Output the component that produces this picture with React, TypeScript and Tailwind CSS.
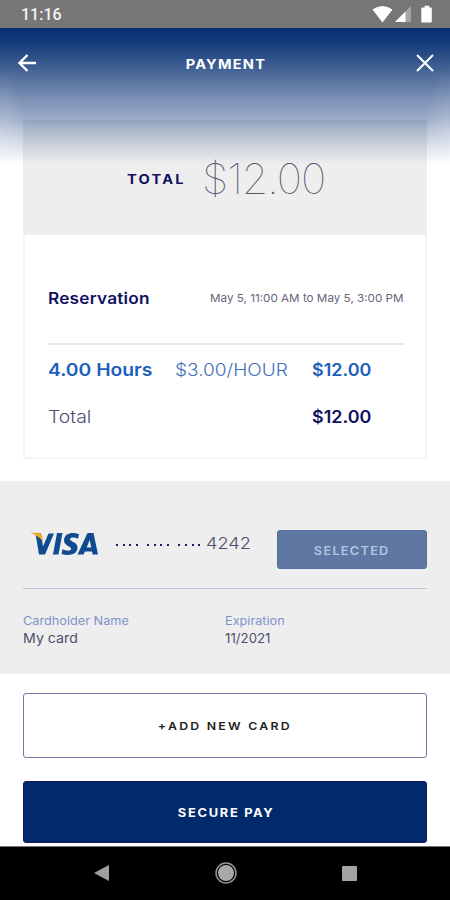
import React from "react";

function StatusBar() {
  return (
    <div className="flex h-7 items-center justify-between bg-[#767676] pl-[21px] pr-[18px]">
      <span className="relative top-[1px] origin-left scale-x-[0.97] font-['Roboto',sans-serif] text-[16.5px] font-medium leading-none text-[#f4f4f4]">11:16</span>
      <svg width="60" height="18" viewBox="0 0 60 18" fill="#fff">
        <path d="M0.5 4.6Q10.500-2.600 20.500 4.600L10.500 17.500Z" />
        <path d="M39 1V17H23Z" fill="#a6a6a6" />
        <path d="M33.500 6.500V17H23Z" />
        <path d="M50.500 2.500h2.200V.8h4.500v1.700h1.800q.8 0 .8.800v13.400q0 .8-.8.800h-8.900q-.8 0-.8-.8V3.300q0-.8 1.200-.8Z" />
      </svg>
    </div>
  );
}

function Header() {
  return (
    <header className="absolute inset-x-0 top-7 h-[136px] bg-[radial-gradient(ellipse_26px_70px_at_0%_80%,rgba(255,255,255,0.2),rgba(255,255,255,0)),radial-gradient(ellipse_26px_70px_at_100%_80%,rgba(255,255,255,0.2),rgba(255,255,255,0)),linear-gradient(to_bottom,rgba(4,45,113,1)_0%,rgba(4,45,113,0.92)_12%,rgba(4,45,113,0.72)_33%,rgba(4,45,113,0.53)_52%,rgba(4,45,113,0.38)_68%,rgba(4,45,113,0.2)_82%,rgba(4,45,113,0)_100%)]">
      <div className="flex h-[70px] items-center justify-between pl-[18px] pr-4">
        <svg width="19" height="18" viewBox="0 0 19 18" fill="none" stroke="#fff" strokeWidth="2.300">
          <path d="M18 9H2M9.500 1L1.500 9l8 8" />
        </svg>
        <h1 className="relative left-[-0.5px] top-[1px] scale-x-[1.12] text-[13px] font-bold leading-none tracking-[1.1px] text-white">PAYMENT</h1>
        <svg width="18" height="18" viewBox="0 0 18 18" fill="none" stroke="#fff" strokeWidth="2">
          <path d="M1 1l16 16M17 1L1 17" />
        </svg>
      </div>
    </header>
  );
}

function Summary() {
  return (
    <section className="mx-[23px] mt-[92px] h-[339px] border-2 border-[#f5f5f6] text-[#4c4c78]">
      <div className="-mx-[2px] -mt-[2px] flex h-[115px] items-center bg-[#eeeeee] pl-[104px] pt-[2px]">
        <div className="w-[75px] pb-[2px]">
          <span className="inline-block origin-left scale-x-[1.12] text-[13px] font-bold leading-none tracking-[2px] text-[#110f60]">TOTAL</span>
        </div>
        <span className="relative top-[1px] origin-left scale-x-[1.03] text-[41.500px] font-thin leading-none tracking-[-1px] text-[#55556f] opacity-[0.99]">$12.00</span>
      </div>
      <div className="pl-[23px] pr-[21px]">
        <div className="flex h-[110px] items-center justify-between border-b-2 border-[#e9eaf0] pt-[19px]">
          <span className="origin-left scale-x-[1.11] text-[15.500px] font-semibold leading-none tracking-[0.2px] text-[#110f60]">Reservation</span>
          <span className="origin-right scale-x-[1.06] whitespace-nowrap text-[11px] leading-none text-[#65657c]">May 5, 11:00 AM to May 5, 3:00 PM</span>
        </div>
        <div className="grid h-[48px] grid-cols-[127px_137px_1fr] items-center pt-[2px] text-[17px] leading-none text-[#1c5fba]">
          <span className="origin-left scale-x-[1.135] justify-self-start font-semibold">4.00 Hours</span>
          <span className="origin-left scale-x-[1.12] justify-self-start font-light text-[#3f6fbb]">$3.00/HOUR</span>
          <span className="origin-left scale-x-[1.055] justify-self-start font-semibold">$12.00</span>
        </div>
        <div className="grid h-[48px] grid-cols-[264px_1fr] items-center pt-px text-[17px] leading-none">
          <span className="origin-left scale-x-[1.14] justify-self-start font-light">Total</span>
          <span className="origin-left scale-x-[1.055] justify-self-start font-semibold text-[#110f60]">$12.00</span>
        </div>
      </div>
    </section>
  );
}

function VisaLogo() {
  return (
    <svg width="68" height="24" viewBox="0 0 68 24">
      <g fill="#104a90">
        <path d="M5.500 1.500h5.500l2 13 5.500-13h5.500L15 22.500H9Z" />
        <path d="M27 1h5.500l-4 21.500H23Z" />
        <path d="M49 2.200l-1 4.500c-3.500-1.600-8-1.500-8 .6 0 2.400 7.500 2.600 7.500 8.200 0 7.700-9.200 8.500-16 6.500l1-4.800c4 2 8.700 2 8.700-.5 0-2.700-7.200-2.800-7.200-8.300C34 1.500 42.500-.5 49 2.200Z" />
        <path fillRule="evenodd" d="M57.500 1h6L68 22.500h-5.300l-.7-3h-7L53.500 22.500h-6ZM59.700 8l-3 7.500h4.600Z" />
      </g>
      <path d="M0 .8h8.500q3 0 3.500 3l1 6Q9 4 0 .8Z" fill="#f3a531" />
    </svg>
  );
}

function CardDots() {
  return (
    <div className="flex gap-[9px]">
      {[0, 1, 2].map((group) => (
        <div key={group} className="flex gap-[4.700px]">
          {[0, 1, 2, 3].map((dot) => (
            <i key={dot} className="size-[2px] bg-[#1d1b62]" />
          ))}
        </div>
      ))}
    </div>
  );
}

function PaymentCard() {
  return (
    <section className="mt-[22px] h-[193px] bg-[#eeeeee] px-[23px] text-[#50506c]">
      <div className="flex h-[108px] border-b border-[#bdc6df] pt-[49px]">
        <div className="flex h-[27px] w-[75px] shrink-0 items-center pl-[7px]"><VisaLogo /></div>
        <div className="flex h-[30px] w-[108px] shrink-0 items-center pl-[18px]"><CardDots /></div>
        <div className="w-[71px] shrink-0 pt-[5px]">
          <span className="block w-max origin-left scale-x-[1.1] text-[16.500px] font-light leading-none">4242</span>
        </div>
        <button className="h-[39px] w-[150px] shrink-0 rounded-[3px] border border-[#5270a5] bg-[#5f78a3] pb-[2px] text-[#b5c5e1]">
          <span className="inline-block scale-x-[1.06] text-[12px] font-semibold leading-none tracking-[1.2px]">SELECTED</span>
        </button>
      </div>
      <div className="grid grid-cols-2 pt-[26px]">
        <div>
          <p className="w-max origin-left scale-x-[1.13] text-[11.250px] leading-[13px] text-[#7d94ca]">Cardholder Name</p>
          <p className="mt-[2px] w-max origin-left scale-x-[1.07] text-[13.250px] leading-[17px]">My card</p>
        </div>
        <div>
          <p className="w-max origin-left scale-x-[1.13] text-[11.250px] leading-[13px] text-[#7d94ca]">Expiration</p>
          <p className="mt-[2px] w-max origin-left text-[13.250px] leading-[17px]">11/2021</p>
        </div>
      </div>
    </section>
  );
}

function NavigationBar() {
  return (
    <nav className="mt-[3px] flex h-[55px] items-center justify-between border-t border-[#777] bg-black pb-[2px] pl-[94px] pr-[93px]">
      <svg width="15" height="16" viewBox="0 0 15 16" fill="#a0a0a0"><path d="M15 0v16L0 8Z" /></svg>
      <svg width="22" height="22" viewBox="0 0 22 22" fill="none">
        <circle cx="11" cy="11" r="10" stroke="#959595" strokeWidth="1.500" />
        <circle cx="11" cy="11" r="8" fill="#a8a8a8" />
      </svg>
      <i className="size-[15px] rounded-[1px] bg-[#a3a3a3]" />
    </nav>
  );
}

export default function App() {
  return (
    <main className="relative h-[900px] w-[450px] overflow-hidden bg-white font-['Inter',sans-serif]">
      <StatusBar />
      <Summary />
      <Header />
      <PaymentCard />
      <div className="mx-[23px] mt-[19px] flex flex-col gap-[23px]">
        <button className="h-[65px] rounded-[3px] border border-[#7774a2] pb-[3px] text-[#222]">
          <span className="inline-block scale-x-[1.12] text-[11px] font-semibold leading-none tracking-[2px]">+ADD NEW CARD</span>
        </button>
        <button className="h-[62px] rounded-[3px] border border-[#17175f] bg-[#002a6c] pb-[3px] text-white">
          <span className="relative left-[1px] inline-block scale-x-[1.12] text-[11.500px] font-bold leading-none tracking-[1.500px]">SECURE PAY</span>
        </button>
      </div>
      <NavigationBar />
    </main>
  );
}
